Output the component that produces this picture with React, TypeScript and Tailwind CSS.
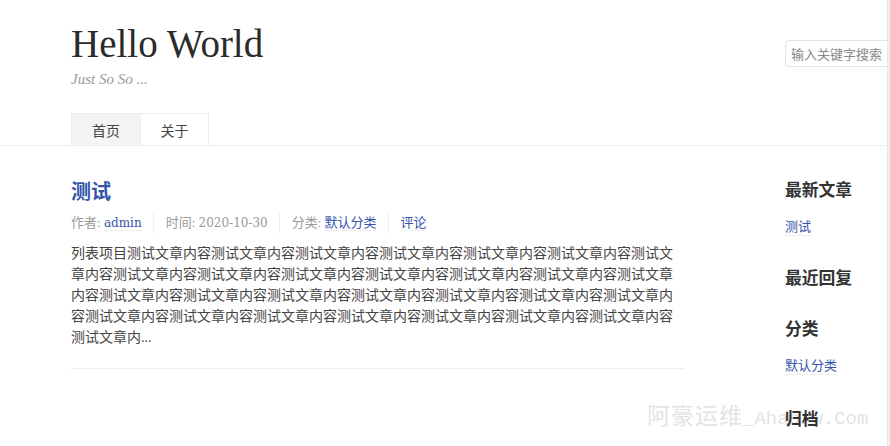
import React from 'react';

const BODY = '列表项目' + '测试文章内容'.repeat(28) + '测试文章内...';

const Widget: React.FC<{ title: string; items: string[]; gap: string }> = ({ title, items, gap }) => (
    <section className={gap}>
        <h3 className="text-[16.8px] leading-6 font-bold text-[#333]">{title}</h3>
        {items.length > 0 && (
            <ul className="mt-[14px]">
                {items.map(it => (
                    <li key={it} className="text-[13px] leading-5">
                        <a className="text-[#3354aa] border-b border-[#eee] pb-px">{it}</a>
                    </li>
                ))}
            </ul>
        )}
    </section>
);

const Latin: React.FC<{ children: React.ReactNode }> = ({ children }) => (
    <span className="text-[12px] font-['DejaVu_Serif',serif]">{children}</span>
);

export default function App() {
    return (
        <div className="relative flex w-[890px] h-[446px] overflow-hidden bg-white font-['Liberation_Serif','Noto_Sans_CJK_SC',serif] text-[#444]">
            <div className="flex-1 min-w-0 flex flex-col">
                <header className="border-b border-[#eee] pl-[71px] grid grid-cols-[614px_1fr] gap-x-[100px]">
                    <div className="pt-5">
                        <h1 className="text-[39px] leading-[48px] text-[#2b2b2b]">Hello World</h1>
                        <p className="mt-px text-[15px] leading-5 italic text-[#999]">Just So So ...</p>
                        <nav className="mt-6 flex">
                            <a className="w-[69px] h-8 flex items-center justify-center text-sm bg-[#f4f4f4] border-t border-l border-[#eee] text-[#444] font-['Noto_Sans_CJK_SC',sans-serif]">首页</a>
                            <a className="w-[69px] h-8 flex items-center justify-center text-sm bg-white border-t border-l border-r border-[#eee] text-[#444] font-['Noto_Sans_CJK_SC',sans-serif]">关于</a>
                        </nav>
                    </div>
                    <div className="pt-10 overflow-hidden">
                        <input
                            placeholder="输入关键字搜索"
                            className="w-[160px] h-[27px] border border-[#e4e4e4] rounded-sm pl-[5px] text-[13px] placeholder:text-[#888] outline-none font-['Noto_Sans_CJK_SC',sans-serif]"
                        />
                    </div>
                </header>
                <main className="pl-[71px] grid grid-cols-[614px_1fr] gap-x-[100px] pt-8">
                    <article className="border-b border-[#eee] pb-5 self-start">
                        <h2 className="text-[20px] leading-7 font-bold text-[#3354aa]">测试</h2>
                        <ul className="mt-[7px] flex text-[13px] leading-5 text-[#999]">
                            <li className="pr-[11px]">作者: <a className="text-[#3354aa] border-b border-[#eee]"><Latin>admin</Latin></a></li>
                            <li className="pl-3 pr-[11px] border-l border-[#eee]">时间: <Latin>2020-10-30</Latin></li>
                            <li className="pl-3 pr-[11px] border-l border-[#eee]">分类: <a className="text-[#3354aa] border-b border-[#eee]">默认分类</a></li>
                            <li className="pl-3 border-l border-[#eee]"><a className="text-[#3354aa] border-b border-[#eee]">评论</a></li>
                        </ul>
                        <p className="mt-[10px] text-sm leading-[21px] text-[#444] break-all">{BODY}</p>
                    </article>
                    <aside className="mt-[1px]">
                        <Widget title="最新文章" items={['测试']} gap="mb-[30px]" />
                        <Widget title="最近回复" items={[]} gap="mb-[27px]" />
                        <Widget title="分类" items={['默认分类']} gap="mb-[32px]" />
                        <Widget title="归档" items={[]} gap="" />
                    </aside>
                </main>
            </div>
            <div className="w-[3px] h-full bg-[#f1f1f1] border-l border-[#e6e6e6]" />
            <div className="absolute left-[647px] top-[400px] pointer-events-none select-none text-[#000] opacity-[0.11] leading-7 whitespace-nowrap">
                <span className="text-[23px] font-['Noto_Sans_CJK_SC',sans-serif] tracking-[1px]">阿豪运维</span>
                <span className="text-[19px] font-['Liberation_Mono',monospace]">_AhaoYw.Com</span>
            </div>
        </div>
    );
}
